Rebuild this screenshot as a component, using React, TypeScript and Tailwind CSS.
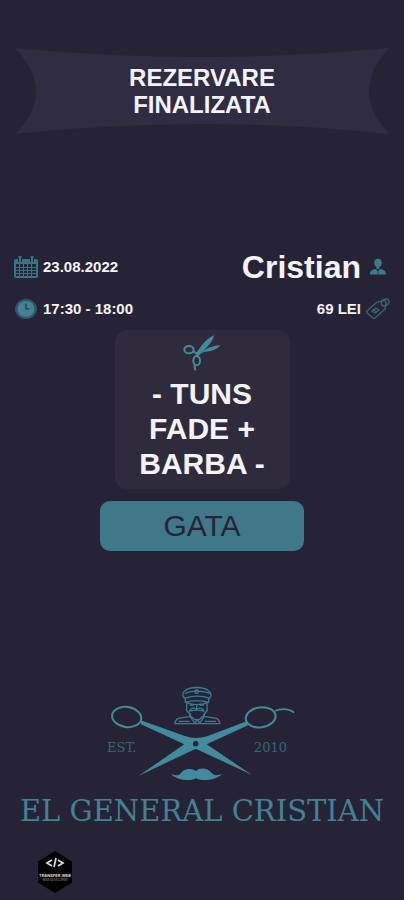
import type { ReactNode } from "react";

function CalendarIcon() {
  return (
    <svg viewBox="0 0 24 22" className="h-[22px] w-6" aria-hidden="true">
      <path fill="#347586" fillRule="evenodd" d="M2 3h20q2 0 2 2v15q0 2-2 2H2q-2 0-2-2V5q0-2 2-2ZM2 8v12h20V8Z" />
      <path stroke="#347586" strokeWidth="3" d="M6 0v5M18 0v5" />
      <path stroke="#272336" strokeWidth="1" d="M4.5 2v4M7.5 2v4M16.5 2v4M19.5 2v4" />
      <path stroke="#347586" strokeWidth="1" d="M2 11.5h20M2 14.5h20M2 17.5h20M5.5 8v12M9.5 8v12M13.5 8v12M17.5 8v12" />
    </svg>
  );
}

function ClockIcon() {
  return (
    <svg viewBox="0 0 24 22" className="h-[22px] w-6" aria-hidden="true">
      <ellipse cx="12" cy="11" rx="10.5" ry="9.5" fill="#2e5265" stroke="#2e6274" />
      <ellipse cx="12" cy="11" rx="8.5" ry="8" fill="#428294" />
      <path d="M12 5.5V11h3.5" fill="none" stroke="#272c40" strokeWidth="1.2" />
    </svg>
  );
}

function PersonIcon() {
  return (
    <svg viewBox="0 0 24 22" className="h-[22px] w-6" fill="#3b7c8c" aria-hidden="true">
      <ellipse cx="12" cy="7" rx="3.7" ry="4.2" />
      <path d="M10.5 10h3v3h-3ZM4 18.5c0-3.5 2-5 5.5-5.5l2.5 2 2.5-2c3.5.5 5.500 2 5.500 5.500Z" />
      <path d="M12 14v4" stroke="#272336" strokeWidth=".6" />
    </svg>
  );
}

function TagIcon() {
  return (
    <svg viewBox="0 0 24 22" className="h-[22px] w-6" fill="none" stroke="#37687a" strokeWidth="1.3" aria-hidden="true">
      <path d="m1 13 10-9 7-1.5q2 0 2 2L19 11 9 20q-1 1-2 0l-6-5q-1-1 0-2Z" />
      <path d="M16 7c-2-3 1-6 4-6s4 3 2 5-4 3-6 1Z" />
      <path d="m6 13 4-3 3 2-4 3ZM8 12l3 2" />
    </svg>
  );
}

function ScissorsIcon() {
  return (
    <svg viewBox="0 0 114 108" className="h-9 w-[38px]" aria-hidden="true">
      <g fill="none" stroke="#428b9d" strokeWidth="6">
        <ellipse cx="18" cy="44" rx="14" ry="11" />
        <ellipse cx="41" cy="77" rx="10" ry="14" />
        <path d="m30 49 13 7-1 8M34 90l3 16" />
      </g>
      <path fill="#428b9d" d="M39 56C54 34 68 12 93 1c-3 19-22 38-44 58l-5 8ZM57 52c16-14 34-20 55-21-12 15-31 19-51 20l-10 9Z" />
    </svg>
  );
}

function Emblem() {
  return (
    <svg viewBox="0 0 642 345" className="col-start-1 row-start-1 w-full" aria-hidden="true">
      <g fill="#428b9d">
        <path d="m137 133 133 47q32 12 68 0l117-44 4 12-124 57 135 91-160-74-8-3-8 3-164 78 138-95-130-60Z" />
        <path d="M303 285c-12-10-36-8-45 6-7 10-18 7-30 3 13 18 62 24 75 12 13 12 65 6 78-12-15 5-23 5-31-3-12-16-36-17-47-6Z" />
      </g>
      <circle cx="302" cy="203" r="8" fill="#272336" />
      <g fill="none" stroke="#428b9d" strokeWidth="6">
        <ellipse cx="95" cy="123" rx="44" ry="30" transform="rotate(8 95 123)" />
        <ellipse cx="497" cy="124" rx="45" ry="30" transform="rotate(-8 497 124)" />
        <path strokeWidth="5" d="M540 104c20-7 43-5 58 6" />
      </g>
      <g fill="none" stroke="#397d90" strokeWidth="4" strokeLinejoin="round">
        <path d="M269 67c-8-6-7-17 0-22 15-14 57-14 72 0 9 6 9 16 2 22-20-9-52-9-74 0Z" />
        <path d="M269 52c20-9 53-9 75 0M271 67v12c18-7 50-7 70 0V67M274 80c18 8 46 8 64 0" />
        <circle cx="305" cy="47" r="5" />
        <path d="M275 82v13q-3 10 6 14l5 10 14 12h12l14-12 5-10q8-4 5-14V82" />
        <path d="M284 87h13M314 87h13M305 88v12M284 105c3-10 16-11 21-5 5-6 18-5 22 5-12-3-31-3-43 0Z" />
        <path d="M286 112v9l-36 6q-10 5-10 16h134q0-11-10-16l-36-6v-9M285 121l15 21 7-12 7 12 14-21M250 136h34M329 136h34" />
      </g>
    </svg>
  );
}

function StudioBadge() {
  return (
    <svg viewBox="0 0 36 42" className="h-[42px] w-9">
      <path fill="#020203" d="M18 0 35 10.500v21L18 42 1 31.500v-21Z" />
      <path fill="none" stroke="#ddd" strokeWidth="1.7" d="m15 9-5 3 5 3M21 9l5 3-5 3M19 7l-2 9" />
      <text x="18" y="26" textAnchor="middle" fontSize="4" fontWeight="700" fill="#ddd">TRANSFER.WEB</text>
      <text x="18" y="30" textAnchor="middle" fontSize="3" fill="#999">WEB DEVELOPER</text>
    </svg>
  );
}

function Detail({ children }: { children: ReactNode }) {
  return <div className="flex h-[42px] items-center gap-[5px]">{children}</div>;
}

export default function App() {
  return (
    <main className="flex min-h-screen flex-col bg-[#272336] font-['Liberation_Sans',sans-serif] text-[#f4f3f8]">
      <header className="mx-[15px] mt-12 grid">
        <svg viewBox="0 0 375 86" preserveAspectRatio="none" className="col-start-1 row-start-1 h-[86px] w-full" aria-hidden="true">
          <path fill="#302c43" d="M0 0Q188 18 375 0 335 43 375 86 188 66 0 86 42 44 0 0Z" />
        </svg>
        <h1 className="col-start-1 row-start-1 self-center text-center text-2xl leading-[27px] font-bold">
          REZERVARE
          <br />
          FINALIZATA
        </h1>
      </header>

      <section className="mt-28 flex justify-between px-3.5 text-[15px] font-bold">
        <div className="flex flex-col">
          <Detail>
            <CalendarIcon />
            <span>23.08.2022</span>
          </Detail>
          <Detail>
            <ClockIcon />
            <span>17:30 - 18:00</span>
          </Detail>
        </div>
        <div className="flex flex-col items-end">
          <Detail>
            <span className="text-[32px] leading-10">Cristian</span>
            <PersonIcon />
          </Detail>
          <Detail>
            <span>69 LEI</span>
            <TagIcon />
          </Detail>
        </div>
      </section>

      <section className="mx-auto flex w-[175px] flex-col items-center rounded-xl bg-[#302b3c] pt-[5px] pb-2">
        <ScissorsIcon />
        <h2 className="mt-[5px] text-center text-3xl leading-[35px] font-bold">
          - TUNS
          <br />
          FADE +
          <br />
          BARBA -
        </h2>
      </section>

      <button type="button" className="mx-auto mt-3 h-[50px] w-[204px] rounded-[10px] bg-[#3f7889] text-3xl text-[#272336]">
        GATA
      </button>

      <footer className="mt-[125px] flex flex-col font-['DejaVu_Serif',serif] text-[#428294]">
        <div className="mx-auto grid w-[214px]">
          <Emblem />
          <div className="col-start-1 row-start-1 flex items-start justify-between pt-[62px] pr-[22px] pl-3 text-[13px] leading-5 text-[#33677a]">
            <span>EST.</span>
            <span>2010</span>
          </div>
        </div>
        <p className="text-center text-[29px] leading-10 whitespace-nowrap">EL GENERAL CRISTIAN</p>
        <div className="mt-5 ml-[37px] font-['Inter',sans-serif]">
          <StudioBadge />
        </div>
      </footer>
    </main>
  );
}
